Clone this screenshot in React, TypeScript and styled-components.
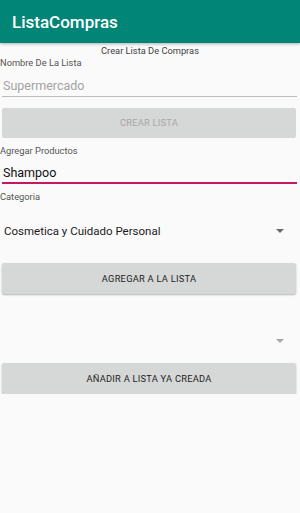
import React from 'react';
import styled, { createGlobalStyle } from 'styled-components';

const GlobalStyle = createGlobalStyle`
  html, body {
    margin: 0;
    padding: 0;
    background: #fafafa;
  }
  body {
    font-family: Roboto, 'Liberation Sans', sans-serif;
  }
`;

// barra superior
const AppBar = styled.header`
  height: 43px;
  background: #008577;
  display: flex;
  align-items: center;
  padding-left: 12px;
  box-shadow: 0 1px 3px rgba(0, 0, 0, 0.3);
  position: relative;
`;

const AppTitle = styled.h1`
  margin: 0;
  font-size: 17px;
  font-weight: 500;
  color: #fff;
`;

const Content = styled.main`
  display: flex;
  flex-direction: column;
  padding-top: 2.6px;
`;

const Heading = styled.div`
  text-align: center;
  font-size: 9.3px;
  color: #424242;
  line-height: 10.8px;
`;

const Label = styled.label<{ $gap: number }>`
  display: block;
  margin-top: ${(p) => p.$gap}px;
  font-size: 9.3px;
  line-height: 10.8px;
  color: #555;
`;

const TextField = styled.input<{ $focused?: boolean }>`
  display: block;
  box-sizing: border-box;
  margin: 0 3px 0 2px;
  width: 295px;
  padding: ${(p) => (p.$focused ? '9.8px 0 1.5px 1px' : '10.1px 0 2.4px 1px')};
  border: none;
  border-bottom: ${(p) => (p.$focused ? '2px solid #c8175d' : '1px solid #bdbdbd')};
  background: transparent;
  font-family: Roboto, 'Liberation Sans', sans-serif;
  font-size: 12.5px;
  line-height: 14.6px;
  color: #111;
  outline: none;

  &::placeholder {
    color: #a3a3a3;
  }
`;

const Button = styled.button<{ $gap: number; $height: number; $disabled?: boolean }>`
  display: flex;
  align-items: center;
  justify-content: center;
  box-sizing: border-box;
  margin: ${(p) => p.$gap}px 4px 0 2px;
  width: 294px;
  height: ${(p) => p.$height}px;
  border: none;
  border-radius: 2px;
  background: #d6d7d7;
  box-shadow: ${(p) => (p.$disabled ? 'none' : '0 1px 2px rgba(0, 0, 0, 0.28)')};
  font-family: Roboto, 'Liberation Sans', sans-serif;
  font-size: 9.3px;
  font-weight: 400;
  letter-spacing: 0.25px;
  color: ${(p) => (p.$disabled ? '#a6a6a6' : '#1e1e1e')};
  padding: 0;
`;

const Spinner = styled.div<{ $gap: number }>`
  display: flex;
  align-items: center;
  justify-content: space-between;
  height: 40px;
  margin-top: ${(p) => p.$gap}px;
  padding: 0 16px 0 4px;
`;

const SpinnerText = styled.span`
  font-size: 11.5px;
  color: #1a1a1a;
`;

const Arrow = styled.span<{ $muted?: boolean }>`
  width: 0;
  height: 0;
  border-left: 4px solid transparent;
  border-right: 4px solid transparent;
  border-top: 4px solid ${(p) => (p.$muted ? '#a8a8a8' : '#6b6b6b')};
  margin-left: auto;
`;

const App: React.FC = () => {
  return (
    <>
      <GlobalStyle />
      <AppBar>
        <AppTitle>ListaCompras</AppTitle>
      </AppBar>
      <Content>
        <Heading>Crear Lista De Compras</Heading>
        <Label $gap={1.4}>Nombre De La Lista</Label>
        <TextField placeholder="Supermercado" />
        <Button $gap={11} $height={30} $disabled>
          CREAR LISTA
        </Button>
        <Label $gap={8}>Agregar Productos</Label>
        <TextField $focused defaultValue="Shampoo" />
        <Label $gap={7.5}>Categoria</Label>
        <Spinner $gap={8.2}>
          <SpinnerText>Cosmetica y Cuidado Personal</SpinnerText>
          <Arrow />
        </Spinner>
        <Button $gap={12} $height={31.5}>
          AGREGAR A LA LISTA
        </Button>
        <Spinner $gap={26.5}>
          <Arrow $muted />
        </Spinner>
        <Button $gap={2} $height={31}>
          AÑADIR A LISTA YA CREADA
        </Button>
      </Content>
    </>
  );
};

export default App;
